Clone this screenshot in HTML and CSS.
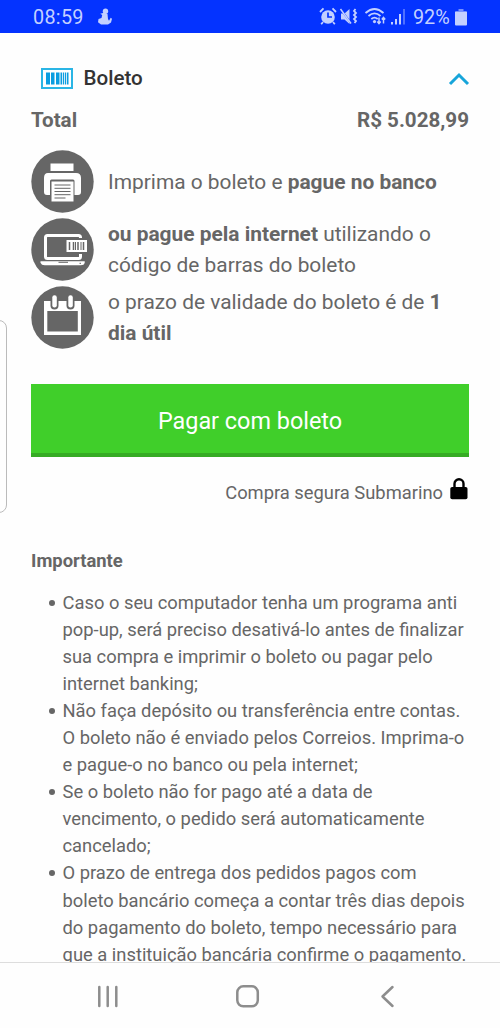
FILE: index.html
```html
<!DOCTYPE html>
<html lang="pt-BR">
<head>
<meta charset="utf-8">
<title>Boleto</title>
<link rel="stylesheet" href="styles.css">
</head>
<body>
<div class="screen">
  <header class="status">
    <span class="clock">08:59</span>
    <svg class="figure" width="16" height="18" viewBox="0 0 16 18"><circle cx="8.500" cy="3.200" r="2.700"/><path d="M3.200 5.800 7 4.800l3.500 1.200.5 5 1 1.700 1.700-3 1.300 1-1 3.800-3 1.900-7 .2L1 14.200 1.500 11l3-1 .7-3z"/></svg>
    <svg class="status-icons" width="90" height="20" viewBox="318 7 90 20">
      <circle cx="328" cy="17" r="6.800"/><path d="m320 12 3.500-3.600m9 0 3.500 3.600M323 22l-1.800 2.200M333 22l1.800 2.200" class="line"/><path d="M328 12.500V17h4" class="cut"/>
      <path d="M341 13.500h3.500l5-4.500v15l-5-4.500H341z"/><path d="m341 9.500 9.500 13" class="cut"/><path d="m340.500 9 10.500 14.500" class="line thin"/><path d="m355.500 9-1.500 2 2 2-2 2 2 2-2 2 2 2-1.500 2" class="line"/>
      <path d="M365.500 13q9-8 18 0M368.500 16q6-5.200 12 0M371.300 19q3.200-2.800 6.400 0" class="line"/><circle cx="374.500" cy="21.600" r="1.600"/><path d="M379 17.500v6m-1.700-2 1.700 2 1.700-2m2.800 2v-6m-1.700 2 1.700-2 1.700 2" class="line thin"/>
      <path d="M391 22h2v2.500h-2zM395 19h2v5.500h-2zM399 14h2v10.500h-2z"/><path d="M403 9h2v15.500h-2z" opacity=".4"/>
    </svg>
    <span class="percent">92%</span>
    <svg class="battery" width="12" height="17" viewBox="0 0 12 17"><path d="M3.500 0h5v2H11q1 0 1 1H0q0-1 1-1h2.500z" opacity=".6"/><path d="M0 3h12v12.500q0 1-1 1H1q-1 0-1-1z"/></svg>
  </header>

  <main class="page">
    <div class="edge-handle"></div>
    <div class="method">
      <svg width="32" height="21" viewBox="0 0 32 21"><rect x="1" y="1" width="30" height="19" fill="none" stroke="#2ab5e5" stroke-width="2"/><path d="M5 4.500h4v12H5zM10 4.500h3.500v12H10zM15 4.500h3.500v12H15zM19.500 4.500h1.500v12h-1.500zM21.800 4.500h1.200v12h-1.200zM23.800 4.500h1.200v12h-1.200zM25.800 4.500h1.700v12h-1.700z" fill="#0b9de0"/></svg>
      <span class="method-name">Boleto</span>
      <svg class="chevron" width="22" height="14" viewBox="0 0 22 14"><path d="m2 12 9-9 9 9"/></svg>
    </div>
    <div class="total"><span>Total</span><span class="amount">R$ 5.028,99</span></div>

    <div class="steps">
      <div class="step">
        <svg width="63" height="63" viewBox="0 0 63 63"><circle cx="31.500" cy="31.500" r="31.200" class="disc"/><path d="M19.500 13.500h23V21h-23zM17 23h28q5 0 5 5v14q0 3-3 3h-3.500V31q0-1.500-1.500-1.500H20.500q-1.500 0-1.500 1.500v14h-3q-3 0-3-3V28q0-5 4-5z" class="white"/><path d="M20.500 31.500h22v20h-22z" class="white"/><path d="M23.500 35h16M23.500 38.300h16M23.500 41.500h16M23.500 44.700h16M23.500 48h11" class="dark fine"/></svg>
        <p>Imprima o boleto e <b>pague no banco</b></p>
      </div>
      <div class="step">
        <svg width="63" height="63" viewBox="0 0 63 63"><circle cx="31.500" cy="31.500" r="31.200" class="disc"/><rect x="14.500" y="17.500" width="35" height="23" rx="2" fill="none" stroke="#fff" stroke-width="3"/><path d="M33.500 20h24v16h-24z" class="disc"/><path d="M35.500 22h20.500v12H35.500z" class="white"/><path d="M38.500 24v8M42.500 24v8M47 24v8M52.500 24v8" class="dark"/><path d="M44.500 24v8M50 24v8" class="dark fine"/><path d="M9.500 43.300h44.200v1.500q-.5 2.500-4 2.500h-36q-3.200 0-4.200-2.500z" class="white"/><path d="M27.500 44.300h9.500M48.500 45.300h1.500" class="dark fine"/></svg>
        <p><b>ou pague pela internet</b> utilizando o<br>código de barras do boleto</p>
      </div>
      <div class="step">
        <svg width="63" height="63" viewBox="0 0 63 63"><circle cx="31.500" cy="31.500" r="31.200" class="disc"/><path d="M13 15h37v34H13z" class="white"/><path d="M16.300 25h30.500v20.500H16.300z" class="disc"/><rect x="19.500" y="8" width="8" height="15.500" rx="4" class="disc"/><rect x="35.500" y="8" width="8" height="15.500" rx="4" class="disc"/><rect x="21.300" y="9.300" width="4.500" height="12.200" rx="2.200" class="white"/><rect x="37.300" y="9.300" width="4.500" height="12.200" rx="2.200" class="white"/></svg>
        <p>o prazo de validade do boleto é de <b>1<br>dia útil</b></p>
      </div>
    </div>

    <button class="pay">Pagar com boleto</button>
    <div class="secure"><span>Compra segura Submarino</span>
      <svg width="18" height="22" viewBox="0 0 18 22"><path d="M4.500 10V5.800a4.500 4.500 0 0 1 9 0V10" fill="none" stroke="#000" stroke-width="2.400"/><rect x=".3" y="9" width="17.200" height="12.300" rx="1.800"/></svg>
    </div>

    <h2>Importante</h2>
    <ul class="notes">
      <li>Caso o seu computador tenha um programa anti<br>pop-up, será preciso desativá-lo antes de finalizar<br>sua compra e imprimir o boleto ou pagar pelo<br>internet banking;</li>
      <li>Não faça depósito ou transferência entre contas.<br>O boleto não é enviado pelos Correios. Imprima-o<br>e pague-o no banco ou pela internet;</li>
      <li>Se o boleto não for pago até a data de<br>vencimento, o pedido será automaticamente<br>cancelado;</li>
      <li>O prazo de entrega dos pedidos pagos com<br>boleto bancário começa a contar três dias depois<br>do pagamento do boleto, tempo necessário para<br>que a instituição bancária confirme o pagamento.</li>
    </ul>
  </main>

  <nav class="navbar">
    <svg width="500" height="66" viewBox="0 962 500 66"><path d="M99.300 987v19M107.700 987v19M116.300 987v19"/><rect x="237.300" y="986.300" width="20.500" height="20" rx="6"/><path d="m392.500 987-10 9.500 10 9.500"/></svg>
  </nav>
</div>
</body>
</html>
```
FILE: styles.css
```css
* { box-sizing: border-box; }
body { margin: 0; font-family: Roboto, "Liberation Sans", sans-serif; color: #666; background: #fefefe; }
svg { display: block; flex: none; }
.screen { width: 500px; height: 1028px; display: flex; flex-direction: column; overflow: hidden; }
.status { height: 33px; flex: none; background: #0433ff; color: #c3d0ff; display: flex; align-items: center; padding: 1px 0 0 33px; font-size: 19.8px; }
.status svg { fill: #c3d0ff; }
.clock { width: 52px; letter-spacing: .3px; }
.figure { margin-left: 12px; }
.status-icons { margin-left: 205px; }
.status-icons .line { fill: none; stroke: #c3d0ff; stroke-width: 1.8; }
.status-icons .cut { fill: none; stroke: #0433ff; stroke-width: 1.7; }
.status-icons .thin { stroke-width: 1.5; }
.percent { margin-left: 5px; width: 39px; white-space: nowrap; }
.battery { margin-left: 3px; }
.page { position: relative; flex: 1; min-height: 0; overflow: hidden; padding: 30px 31px 0; }
.edge-handle { position: absolute; left: -12px; top: 287px; width: 19px; height: 193px; border: 1px solid #bbb; border-radius: 8px; }
.method { display: flex; align-items: center; height: 30px; padding-left: 10px; }
.method-name { margin-left: 10.5px; font-size: 20.6px; font-weight: 500; color: #333; }
.chevron { margin-left: auto; margin-right: -1px; margin-top: 1px; }
.chevron path { fill: none; stroke: #17a5da; stroke-width: 3; }
.total { display: flex; justify-content: space-between; height: 30px; margin-top: 12.400px; line-height: 30px; font-size: 20.6px; font-weight: 700; }
.steps { display: flex; flex-direction: column; gap: 4.7px; margin-top: 15px; }
.step { display: flex; align-items: center; height: 63px; gap: 14px; }
.step p { margin: 0; padding-top: 1px; font-size: 20.9px; line-height: 31.2px; white-space: nowrap; }
.disc { fill: #666; }
.white { fill: #fff; }
.dark { fill: none; stroke: #666; stroke-width: 1.5; }
.fine { stroke-width: 1; }
.pay { display: block; width: 438px; height: 73px; margin: 35.100px 0 0; padding: 6px 0 0; border: 0; border-bottom: 4px solid #36ab24; background: #40cf2a; color: #fff; font-family: inherit; font-size: 23.4px; }
.secure { display: flex; justify-content: flex-end; align-items: center; height: 30px; margin-top: 20px; gap: 7px; padding-right: 1px; font-size: 18.35px; }
.secure span { padding-top: 1px; }
.secure svg { margin-top: -6px; }
h2 { margin: 40.500px 0 0; font-size: 18.4px; line-height: 27px; font-weight: 700; }
.notes { margin: 14.500px 0 0; padding-left: 31.500px; font-size: 18.35px; line-height: 27.07px; list-style: none; white-space: nowrap; }
.notes li::before { content: ""; display: inline-block; width: 6px; height: 6px; margin: 0 8px 0 -14px; border-radius: 50%; background: #666; vertical-align: 3px; }
.navbar { height: 66px; flex: none; background: #fefefe; border-top: 1.500px solid #ddd; }
.navbar svg { margin-top: -1px; fill: none; stroke: #8d8d8d; stroke-width: 2.500; stroke-linecap: round; stroke-linejoin: round; }
```
